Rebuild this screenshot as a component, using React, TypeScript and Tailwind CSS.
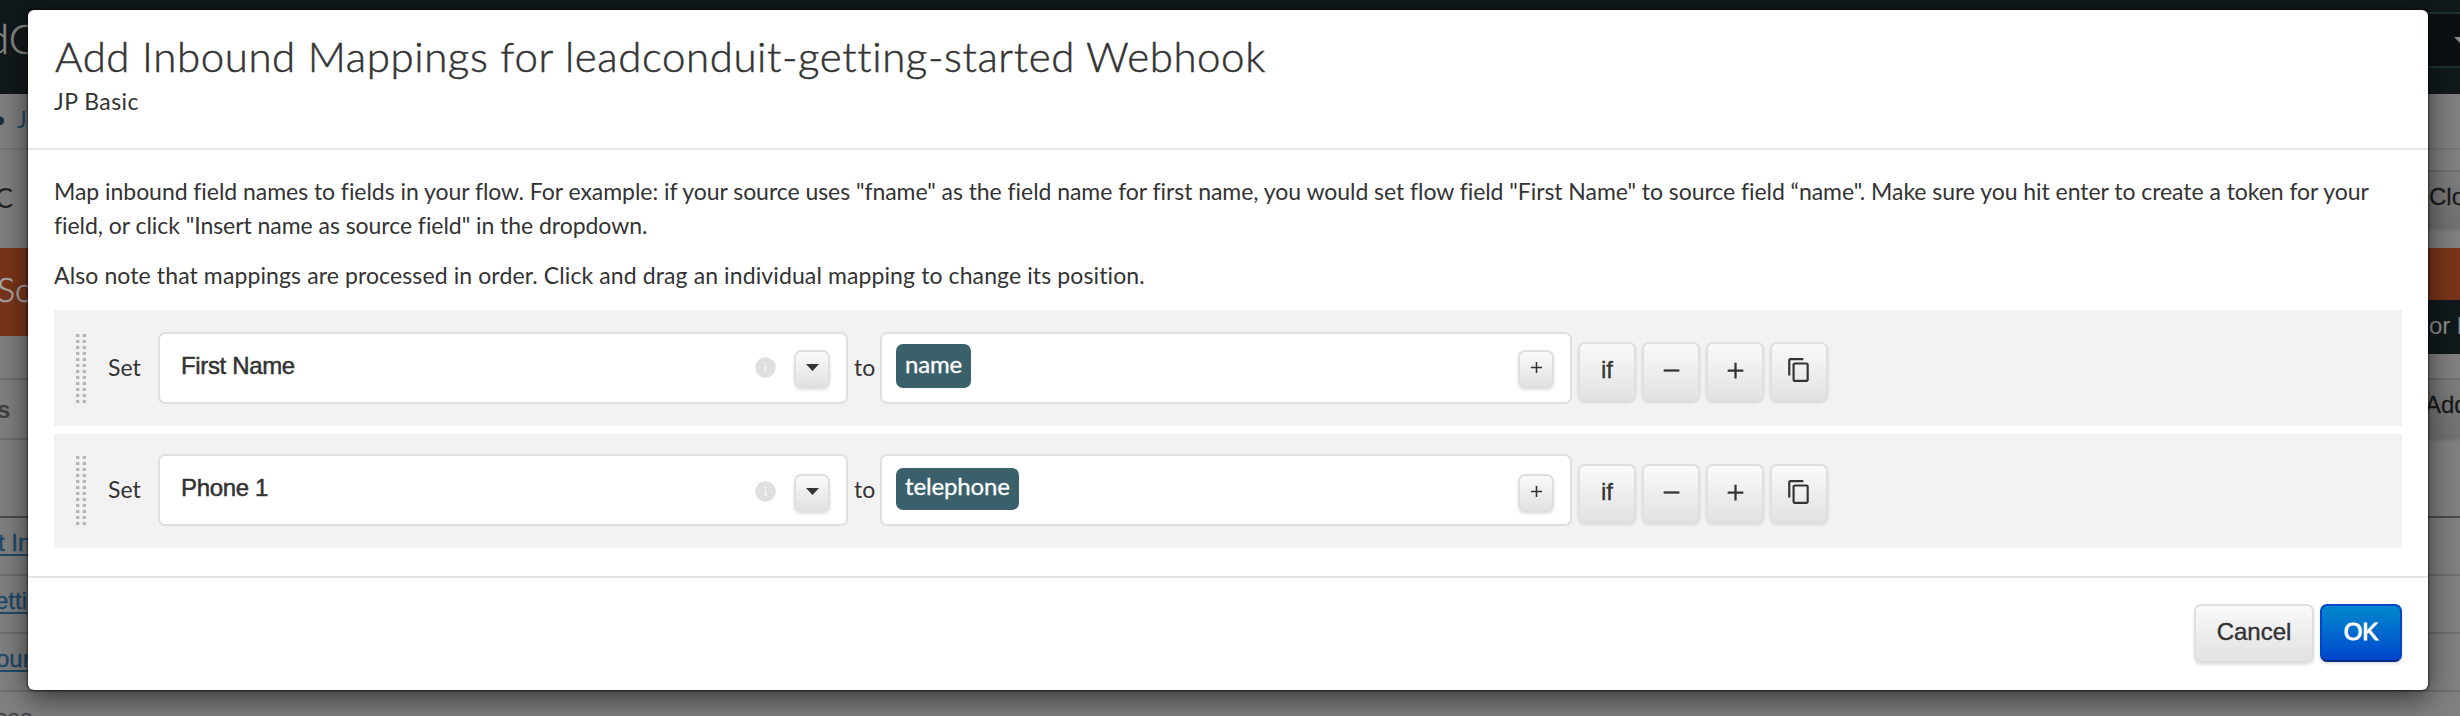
import React from "react";
import { MdAdd, MdContentCopy, MdRemove } from "react-icons/md";

const raised =
  "border-2 border-[#dfdfdf] bg-linear-to-b from-[#fafafa] to-[#e2e2e2] text-[#333] shadow-[0_2px_3px_rgba(0,0,0,0.12)]";

function BackdropLeft() {
  return (
    <div className="flex w-1/2 flex-col whitespace-nowrap">
      <div className="h-[94px] bg-[#11191c] pt-[17px]">
        <p className="-ml-[14px] font-[Lato] text-[42px] leading-[42px] font-light text-[#8a8a8a] [-webkit-text-stroke:0.5px]">dC</p>
      </div>
      <div className="flex h-[56px] border-b-2 border-[#777] pt-[13px] font-[Lato] text-[23px] leading-6">
        <span className="-ml-[7px] w-[24px] text-[#1c2b36]">•</span>
        <span className="text-[#1f4a6b]">J</span>
      </div>
      <div className="h-[98px] pt-[34px]">
        <p className="-ml-[5px] font-[Lato] text-[27px] leading-7 text-[#202223]">C</p>
      </div>
      <div className="h-[88px] bg-[#7a351a] pt-[24px]">
        <p className="-ml-[3px] font-[Lato] text-[34px] leading-[34px] font-light text-[#aaa] [-webkit-text-stroke:0.5px]">So</p>
      </div>
      <div className="h-[44px] border-b-2 border-[#6f6f6f]" />
      <div className="h-[60px] border-b-2 border-[#6f6f6f] pt-[18px]">
        <p className="-ml-[3px] font-['Liberation_Sans'] text-2xl leading-6 font-bold text-[#404040]">s</p>
      </div>
      <div className="h-[78px] border-b-2 border-[#4a4a4a]" />
      <div className="flex flex-col font-['Liberation_Sans'] text-2xl leading-6 text-[#1f4a6b] [-webkit-text-stroke:0.4px]">
        <div className="h-[58px] border-b-2 border-[#6f6f6f] pt-[13px]">
          <a className="-ml-[2px] underline decoration-2 underline-offset-[3px]">t In</a>
        </div>
        <div className="h-[58px] border-b-2 border-[#6f6f6f] pt-[13px]">
          <a className="-ml-[5px] underline decoration-2 underline-offset-[3px]">etti</a>
        </div>
        <div className="h-[58px] border-b-2 border-[#6f6f6f] pt-[13px]">
          <a className="-ml-[4px] underline decoration-2 underline-offset-[3px]">our</a>
        </div>
        <div className="h-[24px] overflow-hidden pt-[14px] text-[#4a4a4a]">
          <p className="-ml-[5px]">ces</p>
        </div>
      </div>
    </div>
  );
}

function BackdropRight() {
  return (
    <div className="flex w-1/2 flex-col overflow-hidden whitespace-nowrap">
      <div className="h-[94px] bg-[#11191c] pt-[12px]">
        <div className="flex h-[56px] items-center justify-end border-y-2 border-[#1d3438] bg-[#0b1113]">
          <svg className="-mr-[6px] h-[6px] w-[12px] fill-[#8a8a8a]" viewBox="0 0 12 6">
            <path d="M0 0h12L6 6z" />
          </svg>
        </div>
      </div>
      <div className="h-[56px] border-b-2 border-[#777]" />
      <div className="h-[98px] pt-[20px]">
        <div className="h-[58px] border-t-2 border-[#707070] bg-linear-to-b from-[#7d7d7d] to-[#717171] pt-[13px] pl-[1199px] shadow-[0_2px_3px_rgba(0,0,0,0.12)]">
          <p className="font-['Liberation_Sans'] text-2xl leading-6 text-[#1a1a1a] [-webkit-text-stroke:0.3px]">Clo</p>
        </div>
      </div>
      <div className="h-[52px] bg-[#7a351a]" />
      <div className="h-[54px] bg-[#11191c] pt-[14px] pl-[1199px]">
        <p className="font-['Liberation_Sans'] text-2xl leading-6 text-[#909090]">or l</p>
      </div>
      <div className="h-[86px] pt-[24px]">
        <div className="h-[60px] border-t-2 border-[#707070] bg-linear-to-b from-[#7d7d7d] to-[#717171] pt-[13px] pl-[1195px] shadow-[0_2px_3px_rgba(0,0,0,0.12)]">
          <p className="font-['Liberation_Sans'] text-2xl leading-6 text-[#1a1a1a] [-webkit-text-stroke:0.3px]">Add</p>
        </div>
      </div>
      <div className="h-[78px] border-b-2 border-[#4a4a4a]" />
      <div className="h-[58px] border-b-2 border-[#6f6f6f]" />
      <div className="h-[58px] border-b-2 border-[#6f6f6f]" />
      <div className="h-[58px] border-b-2 border-[#6f6f6f]" />
    </div>
  );
}

function Grip() {
  const rows = Array.from({ length: 12 }, (_, i) => i * 6);
  return (
    <svg className="mt-[2px] h-[69px] w-[10px]" viewBox="0 0 10 69" shapeRendering="crispEdges">
      {rows.map((y) => (
        <g key={y}>
          <rect x="0" y={y} width="3" height="3" fill="#b5b5b5" />
          <rect x="3" y={y} width="1" height="3" fill="#dcdcdc" />
          <rect x="6" y={y} width="1" height="3" fill="#dcdcdc" />
          <rect x="7" y={y} width="3" height="3" fill="#b5b5b5" />
        </g>
      ))}
    </svg>
  );
}

function ToolButton({ children }: { children: React.ReactNode }) {
  return (
    <button
      className={`flex h-[59px] w-[58px] items-center justify-center rounded-[7px] pb-[3px] font-['Liberation_Sans'] text-2xl leading-6 ${raised}`}
    >
      {children}
    </button>
  );
}

function SmallButton({ children }: { children: React.ReactNode }) {
  return (
    <button className={`flex h-[38px] w-[36px] items-center justify-center rounded-[7px] pb-[3px] ${raised}`}>
      {children}
    </button>
  );
}

interface MappingProps {
  field: string;
  token: string;
  first?: boolean;
}

function Mapping({ field, token, first }: MappingProps) {
  return (
    <div className={`flex items-start bg-[#f2f2f2] pl-[22px] ${first ? "h-[116px] pt-[22px]" : "h-[114px] pt-[20px]"}`}>
      <Grip />
      <span className="mt-[18px] ml-[22px] w-[50px] font-[Lato] text-[23px] leading-[34px]">Set</span>
      <div className="flex h-[72px] w-[690px] items-start rounded-[7px] border-2 border-[#dfdfdf] bg-white pr-[16px] pl-[21px]">
        <span className="mt-[19px] grow font-['Liberation_Sans'] text-2xl leading-[26px] tracking-[-0.35px] [-webkit-text-stroke:0.5px]">
          {field}
        </span>
        <svg className={`mr-[18px] size-[21px] ${first ? "mt-[23px]" : "mt-[25px]"}`} viewBox="0 0 21 21">
          <circle cx="10.5" cy="10.5" r="10.3" fill="#dfdfdf" />
          <path d="M9.5 5.5h2v2h-2zM9.5 9h2v6h-2z" fill="#f2f2f2" />
        </svg>
        <div className={first ? "mt-[16px]" : "mt-[18px]"}>
          <SmallButton>
            <svg className="h-[7px] w-[13px] fill-[#333]" viewBox="0 0 13 7">
              <path d="M0 0h13L6.500 7z" />
            </svg>
          </SmallButton>
        </div>
      </div>
      <span className="mt-[18px] ml-[6px] w-[26px] font-[Lato] text-[23px] leading-[34px]">to</span>
      <div className="flex h-[72px] w-[692px] items-start justify-between rounded-[7px] border-2 border-[#dfdfdf] bg-white pr-[16px] pl-[14px]">
        <span
          className={`rounded-[7px] bg-[#3a616b] px-[9px] font-[Lato] text-2xl leading-[32px] tracking-[-0.15px] text-white [-webkit-text-stroke:0.3px] ${
            first ? "mt-[10px] h-[44px] pt-[4px]" : "mt-[12px] h-[42px] pt-[2px]"
          }`}
        >
          {token}
        </span>
        <div className={first ? "mt-[16px]" : "mt-[18px]"}>
          <SmallButton>
            <MdAdd size={19} />
          </SmallButton>
        </div>
      </div>
      <div className="mt-[10px] ml-[6px] flex gap-[6px]">
        <ToolButton>
          <span className="[-webkit-text-stroke:0.3px]">if</span>
        </ToolButton>
        <ToolButton>
          <MdRemove size={27} />
        </ToolButton>
        <ToolButton>
          <MdAdd size={27} />
        </ToolButton>
        <ToolButton>
          <MdContentCopy size={26} />
        </ToolButton>
      </div>
    </div>
  );
}

export default function App() {
  return (
    <div className="relative h-[716px] w-[2460px] overflow-hidden bg-[#808080]">
      <div className="flex h-full">
        <BackdropLeft />
        <BackdropRight />
      </div>
      <div className="absolute top-[10px] left-[28px] flex h-[680px] w-[2400px] flex-col rounded-[6px] bg-white text-[#333] shadow-[0_0_2px_1px_rgba(0,0,0,0.5),0_8px_30px_rgba(0,0,0,0.6)]">
        <header className="h-[140px] border-b-2 border-[#e5e5e5] px-[26px] pt-[22px] font-[Lato]">
          <h1 className="ml-[1px] text-[42px] leading-[48px] font-light tracking-[0.59px] [-webkit-text-stroke:0.5px]">
            Add Inbound Mappings for leadconduit-getting-started Webhook
          </h1>
          <p className="mt-[4px] text-[23px] leading-[34px] tracking-[0.45px]">JP Basic</p>
        </header>
        <main className="grow px-[26px] pt-[24px]">
          <div className="flex flex-col gap-4 font-[Lato] text-[23px] leading-[34px] whitespace-nowrap">
            <p className="tracking-[-0.047px]">
              Map inbound field names to fields in your flow. For example: if your source uses "fname" as the field
              name for first name, you would set flow field "First Name" to source field “name". Make sure you hit
              enter to create a token for your
              <br />
              field, or click "Insert name as source field" in the dropdown.
            </p>
            <p className="tracking-[0.11px]">
              Also note that mappings are processed in order. Click and drag an individual mapping to change its
              position.
            </p>
          </div>
          <div className="mt-[18px] flex flex-col gap-2">
            <Mapping field="First Name" token="name" first />
            <Mapping field="Phone 1" token="telephone" />
          </div>
        </main>
        <footer className="flex h-[114px] items-start justify-end gap-[6px] border-t-2 border-[#e5e5e5] px-[26px] pt-[26px] font-['Liberation_Sans'] text-2xl leading-6">
          <button className={`h-[59px] w-[120px] rounded-[7px] pb-[3px] [-webkit-text-stroke:0.4px] ${raised}`}>
            Cancel
          </button>
          <button className="h-[58px] w-[82px] rounded-[7px] border-2 border-[#0044cc] border-b-[#002a80] bg-linear-to-b from-[#0088cc] to-[#0044cc] pb-[2px] text-white shadow-[0_2px_3px_rgba(0,0,0,0.12)] [-webkit-text-stroke:1px]">
            OK
          </button>
        </footer>
      </div>
    </div>
  );
}
